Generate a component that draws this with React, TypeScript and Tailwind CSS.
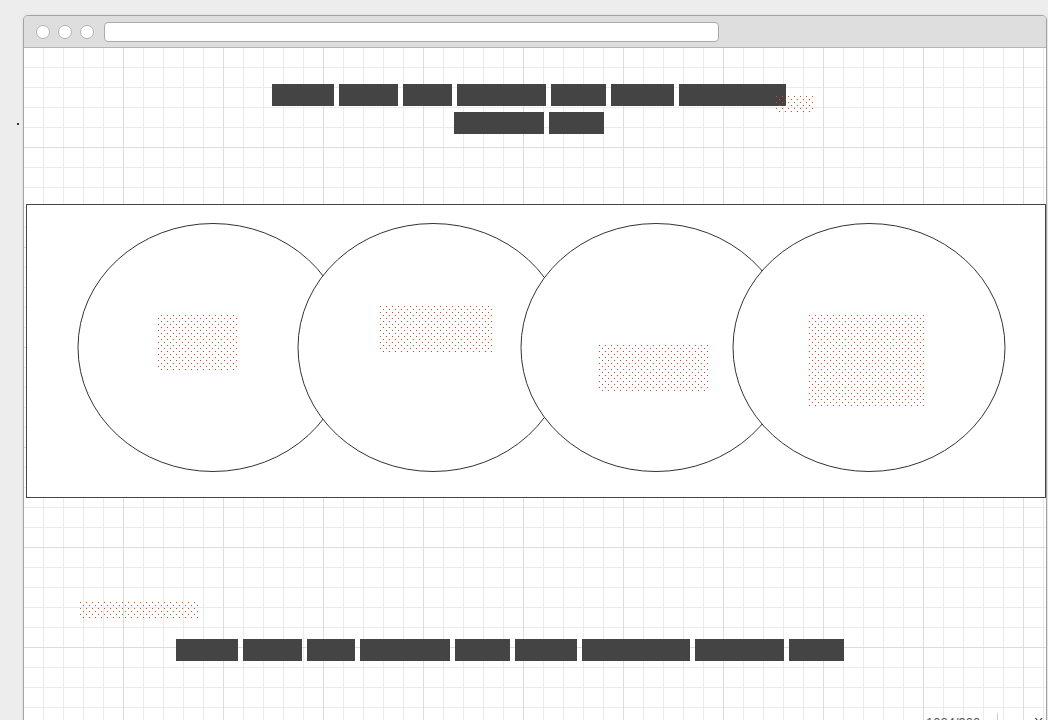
const topWords = [62, 59, 49, 89, 55, 63, 107, 90, 55];
const bottomWords = [62, 59, 48, 90, 55, 62, 108, 89, 55];

function Dots({ id }: { id: string }) {
  return (
    <svg width="100%" height="100%" className="block">
      <defs>
        <pattern id={id} width="6" height="6" patternUnits="userSpaceOnUse">
          <rect x="0" y="0" width="1" height="1" fill="#b4583c" />
          <rect x="3" y="3" width="1" height="1" fill="#f23c1c" />
        </pattern>
      </defs>
      <rect width="100%" height="100%" fill={`url(#${id})`} />
    </svg>
  );
}

function Bars({ widths }: { widths: number[] }) {
  return (
    <>
      {widths.map((w, i) => (
        <div key={i} className="h-[22px] bg-[#444444]" style={{ width: w }} />
      ))}
    </>
  );
}

const ellipses = [
  { cx: 187, rx: 135, box: { x: 132, y: 109, w: 80, h: 59 } },
  { cx: 407, rx: 135, box: { x: 353, y: 100, w: 113, h: 50 } },
  { cx: 630, rx: 135, box: { x: 571, y: 141, w: 112, h: 46 } },
  { cx: 843, rx: 136, box: { x: 781, y: 111, w: 119, h: 92 } },
];

export default function App() {
  return (
    <div className="relative h-[720px] w-[1048px] overflow-hidden bg-[#ededed] pt-[15px] pl-[23px] font-['Liberation_Sans',Arial,sans-serif]">
      <div className="absolute left-[17px] top-[123px] h-[2px] w-[2px] bg-[#333]" />

      <div className="w-[1024px] overflow-hidden rounded-t-[5px] border border-[#a3a3a3] bg-white shadow-[0_0_3px_rgba(0,0,0,0.08)]">
        <div className="flex h-[32px] items-center border-b border-[#b5b5b5] bg-[#dedede] pl-[12px]">
          <div className="flex gap-[8px]">
            <div className="h-[14px] w-[14px] rounded-full border border-[#b4b4b4] bg-white" />
            <div className="h-[14px] w-[14px] rounded-full border border-[#b4b4b4] bg-white" />
            <div className="h-[14px] w-[14px] rounded-full border border-[#b4b4b4] bg-white" />
          </div>
          <div className="ml-[10px] h-[20px] w-[615px] rounded-[4px] border border-[#aaaaaa] bg-white" />
        </div>

        <div className="h-[700px] bg-white bg-[linear-gradient(to_right,#dcdcdc_1px,transparent_1px),linear-gradient(to_bottom,#dcdcdc_1px,transparent_1px),linear-gradient(to_right,#ebebeb_1px,transparent_1px),linear-gradient(to_bottom,#ebebeb_1px,transparent_1px)] [background-size:100px_100px,100px_100px,20px_20px,20px_20px] [background-position:99px_99px,99px_99px,19px_19px,19px_19px] pt-[36px]">
          <div className="relative ml-[248px] flex w-[514px] flex-wrap justify-center gap-x-[5px] gap-y-[6px]">
            <Bars widths={topWords} />
            <div className="absolute left-[504px] top-[12px] h-[17px] w-[37px]">
              <Dots id="d-top" />
            </div>
          </div>

          <div className="ml-[2px] mt-[70px] h-[294px] border border-[#444] bg-white">
            <svg width="1020" height="292" viewBox="1 1 1020 292" className="block">
              <defs>
                <pattern id="d-main" width="6" height="6" patternUnits="userSpaceOnUse">
                  <rect x="0" y="0" width="1" height="1" fill="#b4583c" />
                  <rect x="3" y="3" width="1" height="1" fill="#f23c1c" />
                </pattern>
              </defs>
              {ellipses.map((e, i) => (
                <ellipse key={i} cx={e.cx} cy={143.5} rx={e.rx} ry={124} fill="white" stroke="#333" strokeWidth="1" />
              ))}
              {ellipses.map((e, i) => (
                <rect key={i} x={e.box.x} y={e.box.y} width={e.box.w} height={e.box.h} fill="url(#d-main)" />
              ))}
            </svg>
          </div>

          <div className="ml-[56px] mt-[104px] h-[17px] w-[118px]">
            <Dots id="d-bottom" />
          </div>

          <div className="ml-[152px] mt-[20px] flex gap-[5px]">
            <Bars widths={bottomWords} />
          </div>

          <div className="mt-[52px] flex h-[20px] items-start text-[13px] leading-[16px] text-[#555]">
            <span className="ml-[902px] pt-[2px]">1024/900</span>
            <div className="ml-[17px] h-[20px] border-l border-[#cfcfcf]" />
            <span className="ml-[36px] pt-[2px] text-[#333]">X</span>
          </div>
        </div>
      </div>
    </div>
  );
}
